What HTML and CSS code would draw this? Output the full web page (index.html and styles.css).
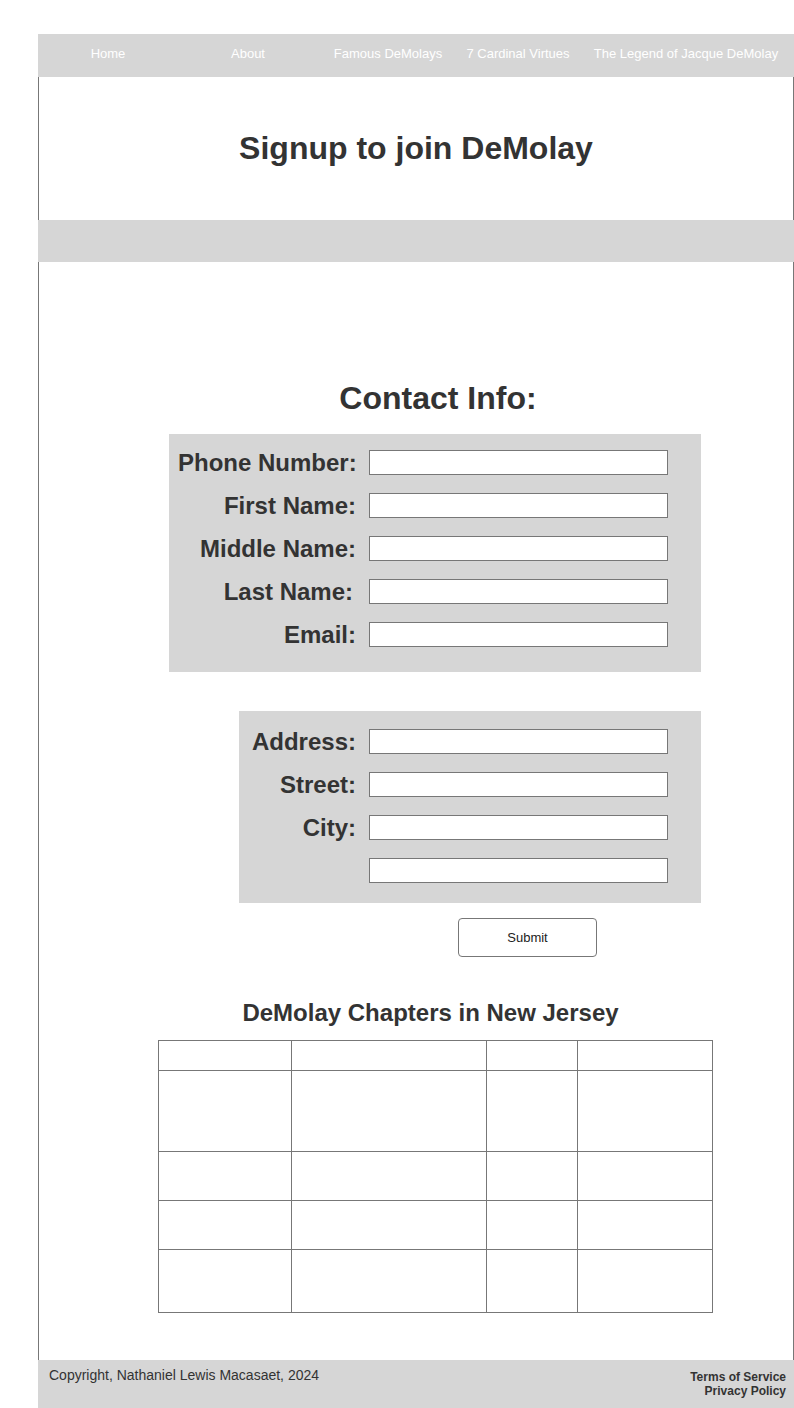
FILE: index.html
```html
<!DOCTYPE html>
<html lang="en">
<head>
<meta charset="utf-8">
<title>Signup to join DeMolay</title>
<link rel="stylesheet" href="styles.css">
</head>
<body>
<div class="page">
  <nav class="nav">
    <a class="nav-item w140" href="#">Home</a>
    <a class="nav-item w140" href="#">About</a>
    <a class="nav-item w140" href="#">Famous DeMolays</a>
    <a class="nav-item w120" href="#">7 Cardinal Virtues</a>
    <a class="nav-item grow" href="#">The Legend of Jacque DeMolay</a>
  </nav>
  <main class="main">
    <header class="hero">
      <h1 class="hero-title">Signup to join DeMolay</h1>
    </header>
    <div class="band"></div>

    <h2 class="section-title">Contact Info:</h2>
    <form class="signup">
      <div class="box box-contact">
        <label class="lbl" for="phone">Phone Number:</label><input class="field" id="phone" type="text">
        <label class="lbl" for="first">First Name:</label><input class="field" id="first" type="text">
        <label class="lbl" for="middle">Middle Name:</label><input class="field" id="middle" type="text">
        <label class="lbl lbl-last" for="last">Last Name:</label><input class="field" id="last" type="text">
        <label class="lbl" for="email">Email:</label><input class="field" id="email" type="text">
      </div>
      <div class="box box-address">
        <label class="lbl" for="address">Address:</label><input class="field" id="address" type="text">
        <label class="lbl" for="street">Street:</label><input class="field" id="street" type="text">
        <label class="lbl" for="city">City:</label><input class="field" id="city" type="text">
        <span class="lbl"></span><input class="field" id="extra" type="text">
      </div>
      <div class="actions">
        <button class="submit" type="button">Submit</button>
      </div>
    </form>

    <h3 class="table-title">DeMolay Chapters in New Jersey</h3>
    <table class="chapters">
      <colgroup>
        <col class="c1"><col class="c2"><col class="c3"><col class="c4">
      </colgroup>
      <tr class="r1"><td></td><td></td><td></td><td></td></tr>
      <tr class="r2"><td></td><td></td><td></td><td></td></tr>
      <tr class="r3"><td></td><td></td><td></td><td></td></tr>
      <tr class="r3"><td></td><td></td><td></td><td></td></tr>
      <tr class="r5"><td></td><td></td><td></td><td></td></tr>
    </table>
  </main>
  <footer class="footer">
    <div class="copy">Copyright, Nathaniel Lewis Macasaet, 2024</div>
    <div class="legal">
      <a href="#">Terms of Service</a>
      <a href="#">Privacy Policy</a>
    </div>
  </footer>
</div>
</body>
</html>
```

FILE: styles.css
```css
html, body {
  margin: 0;
  padding: 0;
  background: #ffffff;
}
body {
  font-family: "Liberation Sans", Arial, sans-serif;
  color: #333333;
}
.page {
  margin: 34px 0 0 38px;
  width: 756px;
}
.nav {
  display: flex;
  height: 43px;
  background: #d6d6d6;
  align-items: center;
}
.nav-item {
  color: #ffffff;
  text-decoration: none;
  font-size: 13px;
  text-align: center;
  line-height: 16px;
  margin-top: -4px;
}
.w140 { width: 140px; }
.w120 { width: 120px; }
.grow { flex: 1; }

.main {
  border-left: 1px solid #777777;
  border-right: 1px solid #777777;
  padding-bottom: 47px;
}
.hero {
  height: 143px;
  display: flex;
  align-items: center;
  justify-content: center;
}
.hero-title {
  margin: 0;
  font-size: 32px;
  line-height: 37px;
  font-weight: bold;
  color: #333333;
}
.band {
  height: 42px;
  background: #d6d6d6;
  margin: 0 -1px;
}
.section-title {
  margin: 118px 0 0 0;
  padding-left: 44px;
  text-align: center;
  font-size: 32px;
  line-height: 37px;
  font-weight: bold;
  color: #333333;
}
.signup {
  margin: 0;
}
.box {
  background: #d6d6d6;
  display: grid;
  row-gap: 18px;
  column-gap: 13px;
  align-items: center;
}
.box-contact {
  margin: 17px 0 0 130px;
  width: 532px;
  box-sizing: border-box;
  padding: 16px 33px 25px 9px;
  grid-template-columns: 178px 299px;
}
.box-address {
  margin: 39px 0 0 200px;
  width: 462px;
  box-sizing: border-box;
  padding: 18px 33px 20px 8px;
  grid-template-columns: 109px 299px;
}
.lbl {
  font-size: 24px;
  font-weight: bold;
  line-height: 25px;
  text-align: right;
  color: #333333;
  white-space: nowrap;
}
.lbl-last { margin-right: 3px; }
.field {
  box-sizing: border-box;
  width: 299px;
  height: 25px;
  margin: 0;
  border: 1px solid #777777;
  background: #ffffff;
  padding: 0 4px;
  font-family: "Liberation Sans", Arial, sans-serif;
  font-size: 13px;
  outline: none;
}
.actions {
  margin: 15px 0 0 419px;
}
.submit {
  display: block;
  box-sizing: border-box;
  width: 139px;
  height: 39px;
  border: 1px solid #777777;
  border-radius: 4px;
  background: #ffffff;
  font-family: "Liberation Sans", Arial, sans-serif;
  font-size: 13px;
  color: #222222;
  padding: 0;
  cursor: pointer;
}
.table-title {
  margin: 42px 0 0 0;
  padding-left: 29px;
  text-align: center;
  font-size: 24px;
  line-height: 28px;
  font-weight: bold;
  color: #333333;
}
.chapters {
  margin: 13px 0 0 119px;
  border-collapse: collapse;
  width: 554px;
  table-layout: fixed;
}
.chapters td {
  border: 1px solid #777777;
  padding: 0;
}
.c1 { width: 133px; }
.c2 { width: 195px; }
.c3 { width: 91px; }
.c4 { width: 135px; }
.r1 { height: 30px; }
.r2 { height: 81px; }
.r3 { height: 49px; }
.r5 { height: 63px; }

.footer {
  background: #d6d6d6;
  height: 48px;
  display: flex;
  justify-content: space-between;
  align-items: flex-start;
  padding: 7px 8px 0 11px;
  box-sizing: border-box;
}
.copy {
  font-size: 14px;
  line-height: 16px;
  color: #333333;
}
.legal {
  margin-top: 3px;
  display: flex;
  flex-direction: column;
  align-items: flex-end;
}
.legal a {
  font-size: 12px;
  line-height: 14px;
  font-weight: bold;
  color: #333333;
  text-decoration: none;
}
```
